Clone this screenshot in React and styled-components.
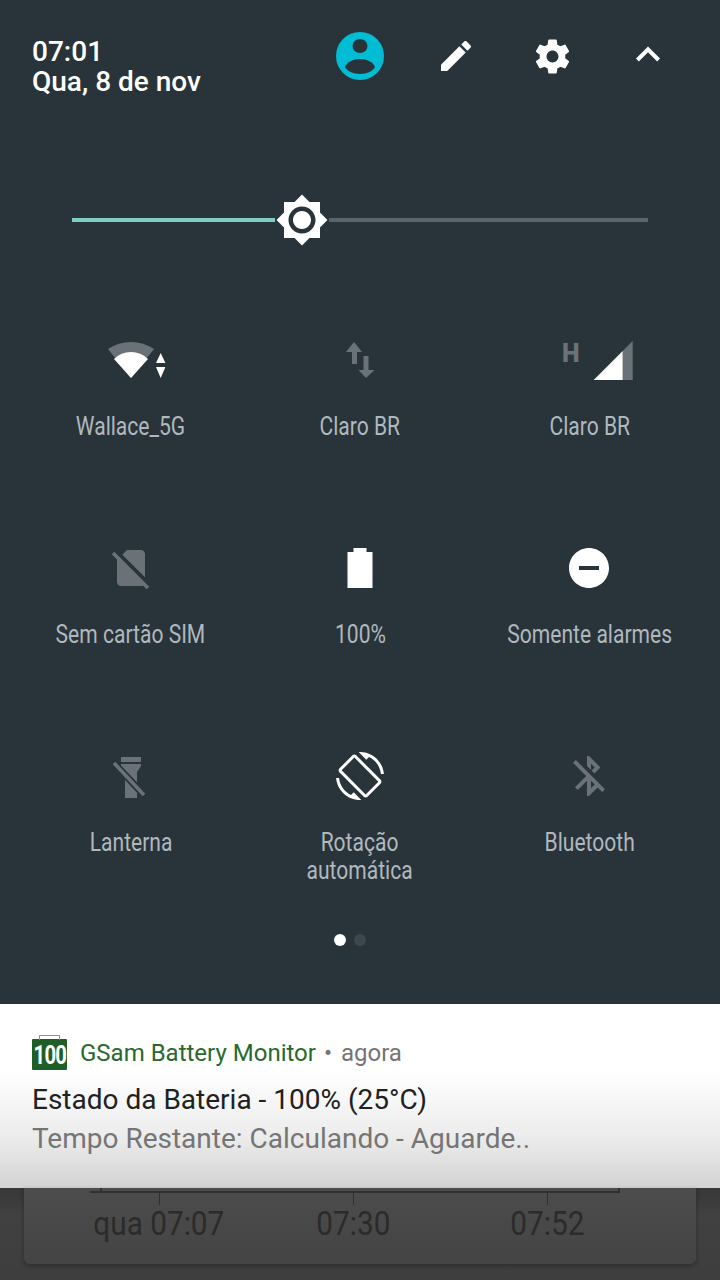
import React from 'react'
import styled, { createGlobalStyle } from 'styled-components'

const WHITE = '#ffffff'
const DIM = '#6a7278'
const BG = '#28343a'

const Global = createGlobalStyle`
  html, body {
    margin: 0;
    padding: 0;
    background: ${BG};
  }
  * {
    box-sizing: border-box;
  }
`

const Page = styled.div`
  width: 720px;
  height: 1280px;
  display: flex;
  flex-direction: column;
  overflow: hidden;
  font-family: Roboto, 'Noto Sans', sans-serif;
`

const Panel = styled.section`
  height: 1004px;
  background: ${BG};
  display: flex;
  flex-direction: column;
`

const Header = styled.header`
  height: 112px;
  display: flex;
  justify-content: space-between;
  align-items: flex-start;
  padding: 0 24px 0 32px;
`

const Clock = styled.div`
  margin-top: 37px;
  color: ${WHITE};
  font-size: 28px;
  font-weight: 500;
  line-height: 30px;
`

const Actions = styled.div`
  display: flex;
  margin-top: 32px;
`

const Action = styled.div`
  width: 96px;
  height: 48px;
  display: flex;
  align-items: center;
  justify-content: center;
`

const Slider = styled.div`
  margin-top: 80px;
  height: 56px;
  padding: 0 72px;
  display: flex;
  align-items: center;
`

const Filled = styled.div`
  width: 203px;
  height: 4px;
  background: #80cbc4;
`

const Rest = styled.div`
  flex: 1;
  height: 4px;
  background: #5a646a;
`

const Thumb = styled.svg`
  display: block;
  width: 54px;
  height: 54px;
  fill: ${WHITE};
`

const Tiles = styled.div`
  margin-top: 88px;
  padding: 0 16px;
  display: grid;
  grid-template-columns: repeat(3, 1fr);
  row-gap: 104px;
`

const Tile = styled.div`
  display: flex;
  flex-direction: column;
  align-items: center;
`

const TileIcon = styled.svg`
  display: block;
  width: 96px;
  height: 48px;
  margin-bottom: 28px;
`

const TileLabel = styled.div`
  color: #b0b8be;
  font-size: 26px;
  line-height: 28px;
  text-align: center;
  white-space: nowrap;
  transform: scaleX(0.81);
`

const Dots = styled.div`
  margin-top: 50px;
  padding-right: 20px;
  display: flex;
  justify-content: center;
  gap: 8px;
`

const Dot = styled.span`
  width: 12px;
  height: 12px;
  border-radius: 50%;
  background: ${(p) => (p.$on ? WHITE : '#3d474e')};
`

const Notification = styled.section`
  height: 184px;
  padding: 31px 32px 0;
  background: linear-gradient(#ffffff 0%, #ffffff 36%, #ececec 72%, #d3d3d3 100%);
`

const AppRow = styled.div`
  display: flex;
  align-items: center;
  height: 36px;
  font-size: 24px;
  white-space: nowrap;
`

const AppIcon = styled.div`
  position: relative;
  flex: none;
  display: flex;
  justify-content: center;
  width: 35px;
  height: 31px;
  margin-top: 2px;
  margin-right: 13px;
  background: #1f5f27;
  border-radius: 1px;
  color: ${WHITE};
  font-size: 26px;
  font-weight: 700;
  line-height: 33px;

  &::before {
    content: '';
    position: absolute;
    left: 7px;
    right: 7px;
    top: -4px;
    height: 4px;
    border: 1px solid #8a9a8c;
    border-bottom: none;
  }
`

const AppIconText = styled.span`
  letter-spacing: -1px;
  transform: scaleX(0.78);
`

const AppName = styled.span`
  color: #27692f;
`

const Meta = styled.span`
  color: #757575;
  margin-left: 8px;
  word-spacing: 3px;
`

const Title = styled.div`
  margin-top: 9px;
  color: #212121;
  font-size: 28px;
  line-height: 40px;
  white-space: nowrap;
`

const Body = styled.div`
  margin-top: -1px;
  color: #757575;
  font-size: 28px;
  line-height: 40px;
  white-space: nowrap;
`

const Behind = styled.div`
  flex: 1;
  padding: 0 24px;
  background: linear-gradient(#373737, #414141 30%, #3e3e3e);
`

const Card = styled.div`
  height: 76px;
  padding-left: 38px;
  background: linear-gradient(#4c4c4c, #444444);
  border-radius: 0 0 6px 6px;
  box-shadow: 0 2px 5px rgba(0, 0, 0, 0.3);
`

const Axis = styled.div`
  position: relative;
  height: 5px;
  margin: 0 76px 0 28px;
  border-bottom: 2px solid #303030;
  border-right: 2px solid #303030;

  &::before {
    content: '';
    position: absolute;
    left: 10px;
    top: 0;
    height: 5px;
    width: 2px;
    background: #303030;
  }
`

const Ticks = styled.div`
  display: flex;
`

const Tick = styled.div`
  width: 194px;
  display: flex;
  flex-direction: column;
  align-items: center;
  color: #2b2b2b;
  font-size: 34px;
  line-height: 36px;
  white-space: nowrap;

  &::before {
    content: '';
    width: 1px;
    height: 12px;
    background: #303030;
  }
`

const TickText = styled.span`
  transform: scaleX(0.875);
`

const Wifi = () => (
  <TileIcon viewBox="0 0 96 48">
    <path fill={DIM} d="M48 42 25 13A41 41 0 0 1 71 13Z" />
    <path fill={WHITE} d="M48 42 31 23A24 24 0 0 1 65 23Z" />
    <path fill={WHITE} d="M73 27 77.7 17 82.4 27ZM73 31 77.7 42 82.4 31Z" />
  </TileIcon>
)

const Data = () => (
  <TileIcon viewBox="0 0 96 48" fill={DIM}>
    <path d="M42 6 50 16H45V28H40V16H34Z" />
    <path d="M54 42 46.5 34H51.5V20H56.5V34H62.5Z" />
  </TileIcon>
)

const Signal = () => (
  <TileIcon viewBox="0 0 96 48">
    <text x="21" y="26" fill={DIM} fontFamily="Roboto, sans-serif" fontSize="25" fontWeight="900">H</text>
    <path fill={DIM} d="M81.7 44V15L91.7 5V44Z" />
    <path fill={WHITE} d="M52.7 44 81.7 15V44Z" />
  </TileIcon>
)

const NoSim = () => (
  <TileIcon viewBox="-12 0 48 24" fill={DIM}>
    <path d="M18.99 5c0-1.1-.89-2-1.99-2h-7L7.66 5.34 19 16.68 18.99 5zM3.65 3.88L2.38 5.15 5 7.77V19c0 1.1.9 2 2 2h10.01c.35 0 .67-.1.96-.26l1.88 1.88 1.27-1.27L3.65 3.88z" />
  </TileIcon>
)

const Battery = () => (
  <TileIcon viewBox="0 0 96 48" fill={WHITE}>
    <path d="M41.5 4H54.5V8H60.5V44H35.5V8H41.5Z" />
  </TileIcon>
)

const Dnd = () => (
  <TileIcon viewBox="-12 0 48 24" fill={WHITE}>
    <path d="M12 2C6.48 2 2 6.48 2 12s4.48 10 10 10 10-4.48 10-10S17.52 2 12 2zm5 11H7v-2h10v2z" />
  </TileIcon>
)

const Flashlight = () => (
  <TileIcon viewBox="0 0 96 48" fill={DIM}>
    <path d="M38 5H58V10H38Z" />
    <path d="M38 12H58V14L54 20V46H42V20L38 14Z" />
    <path stroke={BG} strokeWidth="7" d="M31 11 61 43" />
    <path stroke={DIM} strokeWidth="3.5" d="M31 11 61 43" />
  </TileIcon>
)

const Rotation = () => (
  <TileIcon viewBox="-12 0 48 24" fill={WHITE}>
    <path d="M16.48 2.52c3.27 1.55 5.61 4.72 5.97 8.48h1.5C23.44 4.84 18.29 0 12 0l-.66.03 3.81 3.81 1.33-1.32zm-6.25-.77c-.59-.59-1.54-.59-2.12 0L1.75 8.11c-.59.59-.59 1.54 0 2.12l12.02 12.02c.59.59 1.54.59 2.12 0l6.36-6.36c.59-.59.59-1.54 0-2.12L10.23 1.75zm4.6 19.44L2.81 9.17l6.36-6.36 12.02 12.02-6.36 6.36zm-7.31.29C4.25 19.94 1.91 16.76 1.55 13H.05C.56 19.16 5.71 24 12 24l.66-.03-3.81-3.81-1.33 1.32z" />
  </TileIcon>
)

const Bluetooth = () => (
  <TileIcon viewBox="-12 0 48 24" fill={DIM}>
    <path d="M13 5.83l1.88 1.88-1.6 1.6 1.41 1.41 3.02-3.02L12 2h-1v5.03l2 2v-3.2zM5.41 4L4 5.41 10.59 12 5 17.59 6.41 19 11 14.41V22h1l4.29-4.29 2.3 2.29L20 18.59 5.41 4zM13 18.17v-3.76l1.88 1.88L13 18.17z" />
  </TileIcon>
)

const tiles = [
  { icon: Wifi, label: 'Wallace_5G' },
  { icon: Data, label: 'Claro BR' },
  { icon: Signal, label: 'Claro BR' },
  { icon: NoSim, label: 'Sem cartão SIM' },
  { icon: Battery, label: '100%' },
  { icon: Dnd, label: 'Somente alarmes' },
  { icon: Flashlight, label: 'Lanterna' },
  { icon: Rotation, label: 'Rotação', second: 'automática' },
  { icon: Bluetooth, label: 'Bluetooth' },
]

export default function App() {
  return (
    <Page>
      <Global />
      <Panel>
        <Header>
          <Clock>
            <div>07:01</div>
            <div>Qua, 8 de nov</div>
          </Clock>
          <Actions>
            <Action>
              <svg width="48" height="48" viewBox="0 0 48 48">
                <circle cx="24" cy="24" r="24" fill="#00bcd4" />
                <ellipse cx="24" cy="14" rx="7.5" ry="7" fill={BG} />
                <path fill={BG} d="M9 35C11 30 17 27 24 27S37 30 39 35C37 39 31 42 24 42S11 39 9 35Z" />
              </svg>
            </Action>
            <Action>
              <svg width="40" height="40" viewBox="0 0 24 24" fill={WHITE}>
                <path d="M3 17.25V21h3.75L17.81 9.94l-3.75-3.75L3 17.25zM20.71 7.04c.39-.39.39-1.02 0-1.41l-2.34-2.34c-.39-.39-1.02-.39-1.41 0l-1.83 1.83 3.75 3.75 1.83-1.83z" />
              </svg>
            </Action>
            <Action>
              <svg width="41" height="41" viewBox="0 0 24 24" fill={WHITE}>
                <path d="M19.43 12.98c.04-.32.07-.64.07-.98s-.03-.66-.07-.98l2.11-1.65c.19-.15.24-.42.12-.64l-2-3.46c-.12-.22-.39-.3-.61-.22l-2.49 1c-.52-.4-1.08-.73-1.69-.98l-.38-2.65C14.46 2.18 14.25 2 14 2h-4c-.25 0-.46.18-.49.42l-.38 2.65c-.61.25-1.17.59-1.69.98l-2.49-1c-.23-.09-.49 0-.61.22l-2 3.46c-.13.22-.07.49.12.64l2.11 1.65c-.04.32-.07.65-.07.98s.03.66.07.98l-2.11 1.65c-.19.15-.24.42-.12.64l2 3.46c.12.22.39.3.61.22l2.49-1c.52.4 1.08.73 1.69.98l.38 2.65c.03.24.24.42.49.42h4c.25 0 .46-.18.49-.42l.38-2.65c.61-.25 1.17-.59 1.69-.98l2.49 1c.23.09.49 0 .61-.22l2-3.46c.12-.22.07-.49-.12-.64l-2.11-1.65zM12 15.5c-1.93 0-3.5-1.57-3.5-3.5s1.57-3.5 3.5-3.5 3.5 1.57 3.5 3.5-1.57 3.5-3.5 3.5z" />
              </svg>
            </Action>
            <Action>
              <svg width="48" height="48" viewBox="0 0.7 24 24" fill={WHITE}>
                <path d="M12 8l-6 6 1.41 1.41L12 10.83l4.59 4.58L18 14z" />
              </svg>
            </Action>
          </Actions>
        </Header>

        <Slider>
          <Filled />
          <Thumb viewBox="0 0 24 24">
            <path d="M20 8.69V4h-4.69L12 .69 8.69 4H4v4.69L.69 12 4 15.31V20h4.69L12 23.31 15.31 20H20v-4.69L23.31 12 20 8.69zM12 18c-3.31 0-6-2.69-6-6s2.69-6 6-6 6 2.69 6 6-2.69 6-6 6zm0-10c-2.21 0-4 1.79-4 4s1.79 4 4 4 4-1.79 4-4-1.79-4-4-4z" />
          </Thumb>
          <Rest />
        </Slider>

        <Tiles>
          {tiles.map(({ icon: Icon, label, second }, i) => (
            <Tile key={i}>
              <Icon />
              <TileLabel>
                {label}
                {second && <br />}
                {second}
              </TileLabel>
            </Tile>
          ))}
        </Tiles>

        <Dots>
          <Dot $on />
          <Dot />
        </Dots>
      </Panel>

      <Notification>
        <AppRow>
          <AppIcon><AppIconText>100</AppIconText></AppIcon>
          <AppName>GSam Battery Monitor</AppName>
          <Meta>• agora</Meta>
        </AppRow>
        <Title>Estado da Bateria - 100% (25°C)</Title>
        <Body>Tempo Restante: Calculando - Aguarde..</Body>
      </Notification>

      <Behind>
        <Card>
          <Axis />
          <Ticks>
            <Tick><TickText>qua 07:07</TickText></Tick>
            <Tick><TickText>07:30</TickText></Tick>
            <Tick><TickText>07:52</TickText></Tick>
          </Ticks>
        </Card>
      </Behind>
    </Page>
  )
}
